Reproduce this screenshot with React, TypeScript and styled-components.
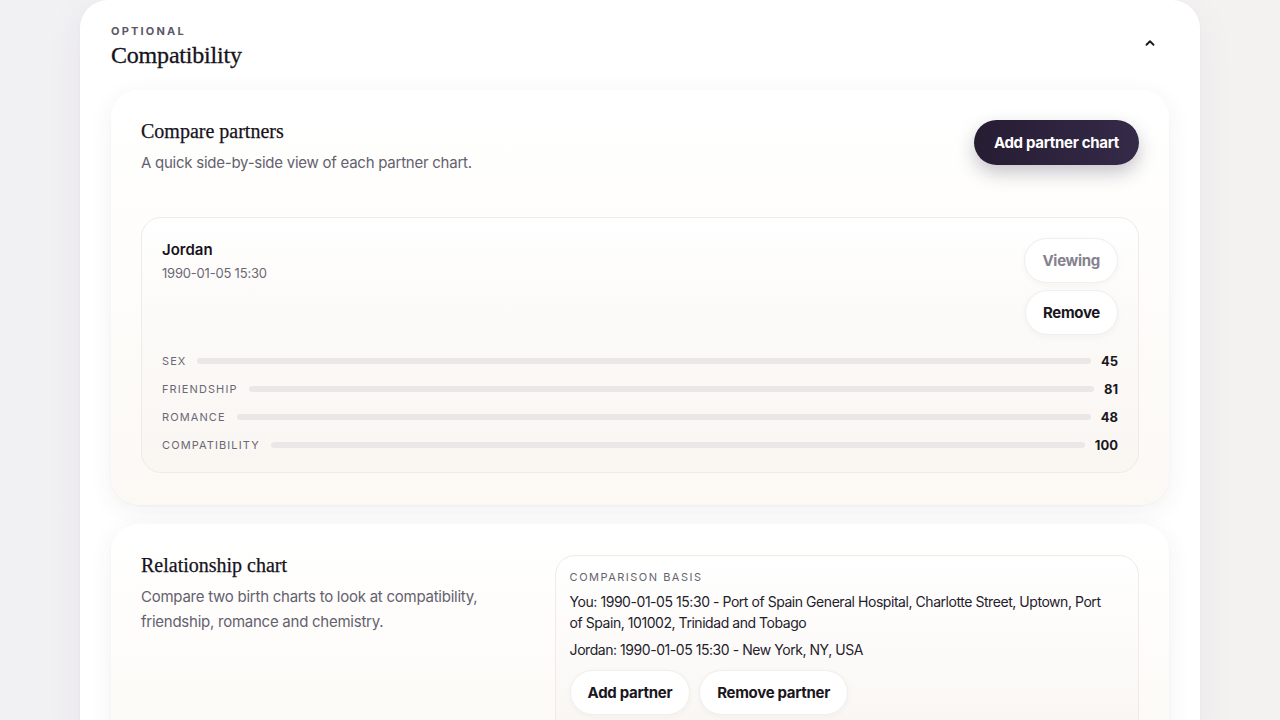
import React from "react";
import styled, { createGlobalStyle } from "styled-components";

const GlobalStyle = createGlobalStyle`
  html, body { margin: 0; padding: 0; }
  body {
    background: linear-gradient(90deg, #f1f0f3 0%, #f3f2f4 50%, #f4f2f1 100%);
    font-family: Inter, "Noto Sans", sans-serif;
    color: #1d1a24;
    overflow: hidden;
  }
  * { box-sizing: border-box; }
`;

const Page = styled.div`
  width: 1120px;
  margin: 0 auto;
  height: 720px;
`;

const Panel = styled.section`
  background: #ffffff;
  border-radius: 28px;
  padding: 24px 31px 0;
  box-shadow: 0 10px 40px rgba(60, 50, 80, 0.06), 0 1px 3px rgba(60, 50, 80, 0.04);
  height: 760px;
`;

const PanelHead = styled.div`
  display: flex;
  justify-content: space-between;
  align-items: flex-start;
  margin-bottom: 20px;
`;

const Eyebrow = styled.div`
  font-size: 11px;
  font-weight: 700;
  letter-spacing: 2.2px;
  color: #5b5868;
  text-transform: uppercase;
  line-height: 14px;
`;

const PanelTitle = styled.h1`
  margin: 2px 0 0;
  font-family: "Liberation Serif", serif;
  font-size: 24px;
  font-weight: 400;
  letter-spacing: -0.2px;
  line-height: 30px;
  color: #16131c;
  -webkit-text-stroke: 0.3px #16131c;
`;

const Chevron = styled.button`
  border: 0;
  background: none;
  padding: 0;
  margin: 12px 12px 0 0;
  color: #1d1a24;
  display: flex;
`;

const Card = styled.div`
  background: linear-gradient(180deg, #ffffff 0%, #fefdfb 40%, #fcf9f5 100%);
  border-radius: 28px;
  padding: 30px 30px 32px;
  box-shadow: 0 6px 24px rgba(60, 50, 80, 0.07), 0 1px 2px rgba(60, 50, 80, 0.04);
  & + & { margin-top: 19px; }
`;

const CardHead = styled.div`
  display: flex;
  justify-content: space-between;
  align-items: flex-start;
  margin-bottom: 42px;
`;

const CardTitle = styled.h2`
  margin: 0;
  font-family: "Liberation Serif", serif;
  font-size: 20px;
  font-weight: 400;
  line-height: 22px;
  color: #16131c;
  -webkit-text-stroke: 0.25px #16131c;
`;

const CardText = styled.p`
  margin: 8px 0 0;
  font-size: 15px;
  line-height: 25px;
  letter-spacing: -0.25px;
  color: #64616e;
`;

const DarkButton = styled.button`
  height: 45px;
  padding: 0 20px;
  border: 0;
  border-radius: 999px;
  background: linear-gradient(90deg, #261d33, #352a48);
  color: #ffffff;
  font-family: inherit;
  font-size: 15px;
  font-weight: 700;
  letter-spacing: -0.3px;
  box-shadow: 0 8px 18px rgba(38, 29, 51, 0.25);
`;

const PillButton = styled.button<{ $muted?: boolean }>`
  height: 45px;
  padding: 0 17px;
  border: 1px solid #f1eeeb;
  border-radius: 999px;
  background: #ffffff;
  color: ${(p) => (p.$muted ? "#85828e" : "#1a1720")};
  font-family: inherit;
  font-size: 15px;
  font-weight: 700;
  letter-spacing: -0.3px;
  box-shadow: 0 2px 6px rgba(60, 50, 80, 0.04);
`;

const Partner = styled.div`
  border: 1px solid #efebe7;
  border-radius: 20px;
  background: linear-gradient(180deg, #ffffff 0%, #fcfaf8 40%, #f9f6f2 100%);
  padding: 20px 20px 13px;
`;

const PartnerTop = styled.div`
  display: flex;
  justify-content: space-between;
  align-items: flex-start;
  margin-bottom: 12px;
`;

const PartnerName = styled.div`
  font-size: 15px;
  font-weight: 600;
  line-height: 20px;
  margin-top: 2px;
  color: #16131c;
`;

const PartnerDate = styled.div`
  margin-top: 5px;
  font-size: 13px;
  letter-spacing: -0.2px;
  color: #6b6874;
`;

const Actions = styled.div`
  display: flex;
  flex-direction: column;
  align-items: flex-end;
  gap: 7px;
`;

const Scores = styled.div`
  display: flex;
  flex-direction: column;
`;

const ScoreRow = styled.div`
  display: flex;
  align-items: center;
  height: 28px;
`;

const ScoreLabel = styled.span`
  font-size: 11px;
  letter-spacing: 1.1px;
  color: #6b6874;
  text-transform: uppercase;
`;

const Track = styled.div`
  flex: 1;
  height: 6px;
  border-radius: 3px;
  background: #ebe7e7;
  margin: 0 10px 0 11px;
  overflow: hidden;
`;

const ScoreValue = styled.span`
  font-size: 13px;
  font-weight: 700;
  color: #1a1720;
  text-align: right;
`;

const Split = styled.div`
  display: grid;
  grid-template-columns: 2fr 3fr;
  gap: 24px;
`;

const Basis = styled.div`
  border: 1px solid #efebe7;
  border-radius: 20px;
  background: linear-gradient(180deg, #ffffff 0%, #fcfaf8 60%, #f9f6f2 100%);
  padding: 14px 28px 20px 14px;
  margin-top: 1px;
`;

const BasisLabel = styled.div`
  font-size: 11px;
  letter-spacing: 1.5px;
  color: #66636f;
  text-transform: uppercase;
  line-height: 14px;
  margin-bottom: 7px;
`;

const BasisLine = styled.p`
  margin: 0 0 6px;
  font-size: 14px;
  line-height: 21px;
  color: #24212b;
  letter-spacing: -0.45px;
`;

const ButtonRow = styled.div`
  display: flex;
  gap: 9px;
  margin-top: 10px;
`;

const scores = [
  { label: "Sex", value: 45 },
  { label: "Friendship", value: 81 },
  { label: "Romance", value: 48 },
  { label: "Compatibility", value: 100 },
];

export default function App() {
  return (
    <>
      <GlobalStyle />
      <Page>
        <Panel>
          <PanelHead>
            <div>
              <Eyebrow>Optional</Eyebrow>
              <PanelTitle>Compatibility</PanelTitle>
            </div>
            <Chevron aria-label="Collapse">
              <svg width="14" height="14" viewBox="0 0 24 24" fill="none" stroke="currentColor" strokeWidth="3.2" strokeLinecap="round" strokeLinejoin="round">
                <path d="M6 15l6-6 6 6" />
              </svg>
            </Chevron>
          </PanelHead>

          <Card>
            <CardHead>
              <div>
                <CardTitle>Compare partners</CardTitle>
                <CardText>A quick side-by-side view of each partner chart.</CardText>
              </div>
              <DarkButton>Add partner chart</DarkButton>
            </CardHead>

            <Partner>
              <PartnerTop>
                <div>
                  <PartnerName>Jordan</PartnerName>
                  <PartnerDate>1990-01-05 15:30</PartnerDate>
                </div>
                <Actions>
                  <PillButton $muted>Viewing</PillButton>
                  <PillButton>Remove</PillButton>
                </Actions>
              </PartnerTop>
              <Scores>
                {scores.map((s) => (
                  <ScoreRow key={s.label}>
                    <ScoreLabel>{s.label}</ScoreLabel>
                    <Track />
                    <ScoreValue>{s.value}</ScoreValue>
                  </ScoreRow>
                ))}
              </Scores>
            </Partner>
          </Card>

          <Card>
            <Split>
              <div>
                <CardTitle>Relationship chart</CardTitle>
                <CardText>
                  Compare two birth charts to look at compatibility, friendship, romance and chemistry.
                </CardText>
              </div>
              <Basis>
                <BasisLabel>Comparison basis</BasisLabel>
                <BasisLine>
                  You: 1990-01-05 15:30 - Port of Spain General Hospital, Charlotte Street, Uptown, Port of Spain, 101002, Trinidad and Tobago
                </BasisLine>
                <BasisLine>Jordan: 1990-01-05 15:30 - New York, NY, USA</BasisLine>
                <ButtonRow>
                  <PillButton>Add partner</PillButton>
                  <PillButton>Remove partner</PillButton>
                </ButtonRow>
              </Basis>
            </Split>
          </Card>
        </Panel>
      </Page>
    </>
  );
}
